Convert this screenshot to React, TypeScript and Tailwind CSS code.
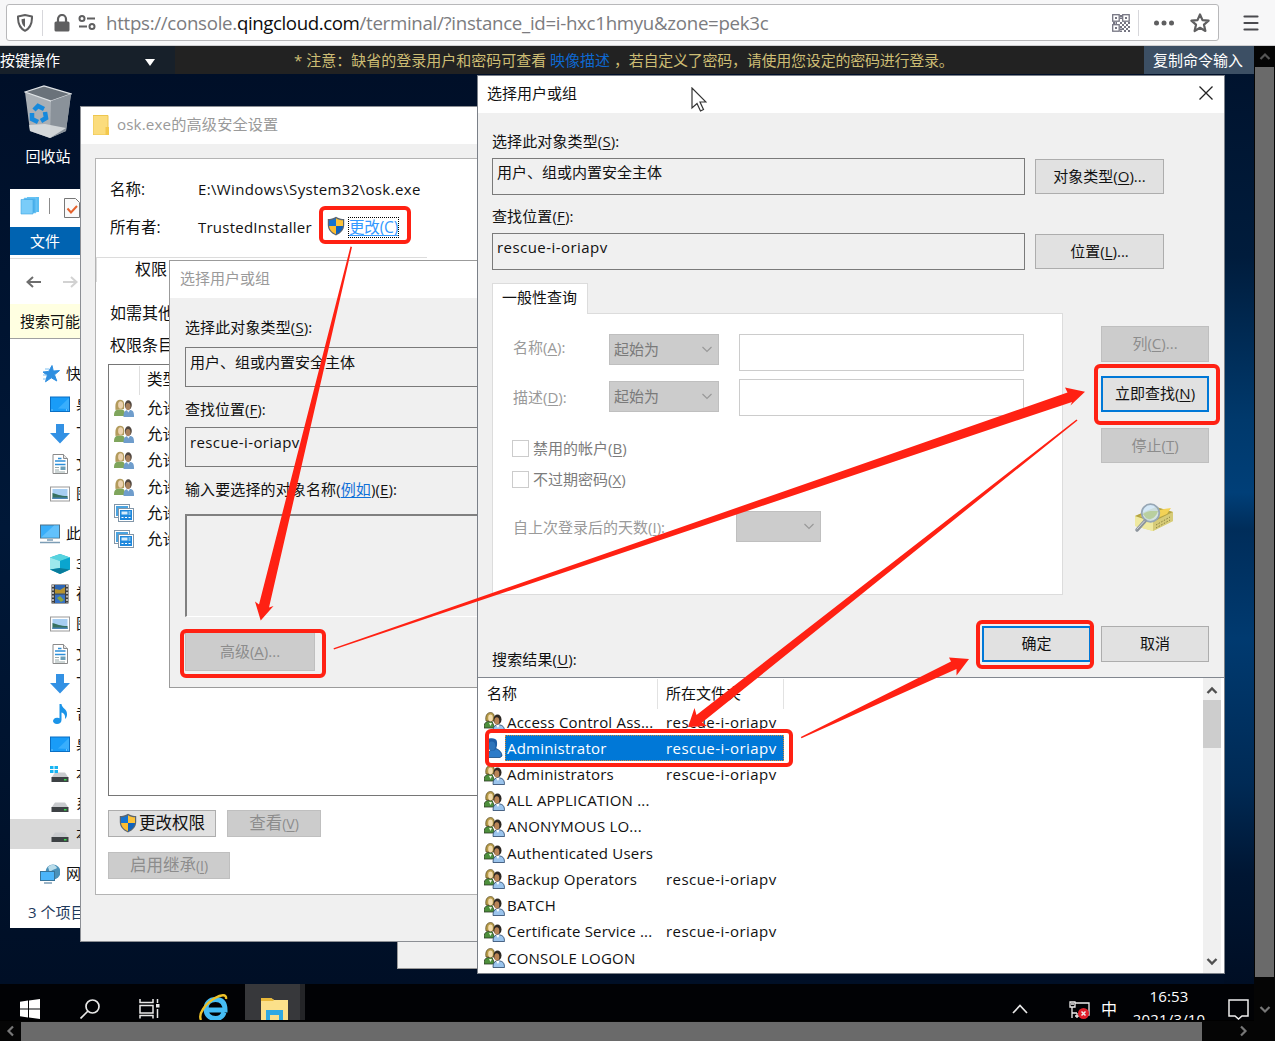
import React from "react";

const Key = ({ k }: { k: string }) => (
  <>
    (<span className="underline underline-offset-2">{k}</span>)
  </>
);

/* ---------- icons ---------- */

const Shield = ({ className = "" }: { className?: string }) => (
  <svg viewBox="0 0 18 20" className={`h-5 w-[18px] shrink-0 ${className}`}>
    <path d="M9 .7C6.500 2.400 3.500 3 .8 3V9c0 5 3.500 8.500 8.200 10.400C13.700 17.500 17.200 14 17.200 9V3C14.500 3 11.500 2.400 9 .7z" fill="#5b6570" />
    <path d="M9 2.200C7 3.600 4.500 4.200 2 4.300V10h7z" fill="#1573d0" />
    <path d="M9 2.200c2 1.400 4.500 2 7 2.100V10H9z" fill="#fcc238" />
    <path d="M2.100 10c.4 4 3.200 6.600 6.900 8.200V10z" fill="#fcbd30" />
    <path d="M15.900 10c-.4 4-3.200 6.600-6.900 8.200V10z" fill="#0f62bd" />
  </svg>
);

const Users = () => (
  <svg viewBox="0 0 20 18" className="h-[18px] w-5 shrink-0">
    <path d="M0 17c0-4 1-6 4-6.500h4c2 .5 3 2 3 6.500z" fill="#7fa55c" />
    <path d="M1.500 11C1 6 1.500.7 6 .7S10.500 5 10 10z" fill="#b39b5c" />
    <ellipse cx="6.600" cy="6" rx="2.500" ry="3.700" fill="#ecd3b0" />
    <path d="M9.500 18c0-4.500 1-6.500 4-7h3c3 .5 3.500 2.500 3.500 7z" fill="#6f9dcc" />
    <ellipse cx="14.300" cy="6" rx="3.500" ry="4.700" fill="#50463e" />
    <ellipse cx="14" cy="7.500" rx="2.500" ry="3.600" fill="#a8805c" />
    <path d="M12.500 11l2 2.500 1.500-2.500z" fill="#e8edf4" />
  </svg>
);

const AppBoxes = () => (
  <svg viewBox="0 0 20 18" className="h-[18px] w-5 shrink-0">
    <rect x=".5" y=".5" width="15" height="13" fill="#fff" stroke="#8296a8" />
    <rect x="2" y="2" width="12" height="10" fill="#4aa3e0" />
    <rect x="4.500" y="4.500" width="15" height="13" fill="#fff" stroke="#8296a8" />
    <rect x="6" y="6" width="12" height="10" fill="#1e88dd" />
    <path d="M7.500 7.500h6v3h-6zM14.500 7.500h2v1h-2zM14.500 9.500h2v1h-2z" fill="#d6edfc" />
    <path d="M7.500 13.500h2M11 13.500h2M14.500 13.500h2" stroke="#fff" />
  </svg>
);

const ListUsers = () => (
  <svg viewBox="0 0 21 20" className="h-5 w-[21px] shrink-0">
    <path d="M0 16c0-4 1-6 4-6.500h4l3 6.500z" fill="#4d8f3c" stroke="#2b3b24" strokeWidth=".8" />
    <path d="M2 9C1 4 3 .5 6.500.5S11 4 10 9z" fill="#b59a48" stroke="#58491f" strokeWidth=".7" />
    <ellipse cx="6.500" cy="6" rx="2.300" ry="3.400" fill="#f3dcae" />
    <path d="M5 11l1.500 3L8 11z" fill="#eef3e8" />
    <ellipse cx="13.500" cy="7.500" rx="4" ry="5" fill="#2c2722" />
    <ellipse cx="12.800" cy="9" rx="2.500" ry="3.800" fill="#b98456" />
    <path d="M9 19.500c0-4 1-6 4-6.500h3c3.500.5 4.500 3 4.500 6.500z" fill="#9bc4ec" stroke="#274468" strokeWidth=".8" />
    <path d="M12 13l2 3 1.500-3z" fill="#fff" />
  </svg>
);

const ListUser = () => (
  <svg viewBox="0 0 21 20" className="h-5 w-[21px] shrink-0">
    <path d="M4.500 19.500c-.5-4 .5-6.500 2.500-7.500l5-1.500c3.500 1.500 6 4 6 7.500l-2 1.500z" fill="#2d7cc8" stroke="#174a80" strokeWidth=".8" />
    <path d="M3 1.500C6-.5 12-.5 12.800 3c.8 3.500 0 7.500-2.300 9.500H7.500C4 10 3 6 3 1.500z" fill="#1d5ea6" />
    <ellipse cx="7.800" cy="8" rx="3.500" ry="4.600" fill="#2d74ba" />
  </svg>
);

const Chevron = ({ className = "", d, w = 2 }: { className?: string; d: "up" | "down" | "left" | "right"; w?: number }) => {
  const paths = { up: "M1.500 8L6 3.500 10.500 8", down: "M1.500 4L6 8.500 10.500 4", left: "M8 1.500L3.500 6 8 10.500", right: "M4 1.500L8.500 6 4 10.500" };
  return (
    <svg viewBox="0 0 12 12" className={`size-3 shrink-0 ${className}`} fill="none" stroke="currentColor" strokeWidth={w}>
      <path d={paths[d]} />
    </svg>
  );
};

const TreeIcon = ({ kind }: { kind: string }) => (
  <svg viewBox="0 0 20 20" className="size-5 shrink-0">
    {kind === "star" && (
      <>
        <path d="M12 1.500l1.300 5.500 6.200-.4-5 4.200 2.300 6.200-5.500-3.200-5.800 4L7.300 11.500 3 8l5.700-.6z" fill="#2f8fe0" stroke="#2f8fe0" />
        <path d="M5 5h4M3 11h4M3 15h3" stroke="#7fc0f0" />
      </>
    )}
    {kind === "desktop" && (
      <>
        <rect x=".5" y="3" width="19" height="14.500" fill="#199cf8" stroke="#0a6fc4" />
        <path d="M8 14.500L19 4v11z" fill="#39aefc" />
        <path d="M1.500 16h2M16 16h2.500" stroke="#bfe4ff" strokeDasharray="1 1" />
      </>
    )}
    {kind === "down" && <path d="M6 0h8v9h6L10 19.500 0 9h6z" fill="#3391e4" />}
    {kind === "doc" && (
      <>
        <path d="M3 .5h10.500L17.500 4.500v15H3z" fill="#fff" stroke="#8a8a8a" />
        <path d="M13.500.5v4h4" fill="#e5e5e5" stroke="#8a8a8a" />
        <path d="M8 4.500h3.500M5 7h10.500M5 10.500h10.500" stroke="#2e8fd8" strokeWidth="1.500" />
        <path d="M5 13.500h4M5 16h4M5 18h10" stroke="#9aa" />
        <path d="M10.500 12.500h5v3.500h-5z" fill="#6b9fb8" />
      </>
    )}
    {kind === "pic" && (
      <>
        <rect x=".5" y="3" width="19" height="14" fill="#fff" stroke="#999" />
        <rect x="2.500" y="5" width="15" height="10" fill="#a7cef2" />
        <path d="M2.500 9c5 1 7 3 15 3v3h-15z" fill="#37715f" />
        <path d="M2.500 13.500h15V15h-15z" fill="#4b86b8" />
      </>
    )}
    {kind === "pc" && (
      <>
        <rect x=".5" y="1" width="19" height="13" fill="#39aefa" stroke="#4e7289" />
        <path d="M1 13.500L14 1.500h5v12z" fill="#62c1fc" />
        <path d="M7 16h6M0 18.500h20" stroke="#7c9db5" strokeWidth="1.500" />
      </>
    )}
    {kind === "cube" && (
      <>
        <path d="M10 0l10 3.500v12L10 20 0 15.500v-12z" fill="#22b4cb" />
        <path d="M0 3.500L10 0l10 3.500L10 7z" fill="#57d3df" />
        <path d="M0 3.500L10 7v7L0 15.500z" fill="#9ce9ec" />
        <path d="M10 7l10-3.500v12L10 14z" fill="#0aa5cf" />
        <path d="M0 15.500L10 14l10 1.500L10 20z" fill="#087c9c" />
      </>
    )}
    {kind === "video" && (
      <>
        <rect x="1.500" y=".5" width="17" height="19" fill="#3c3c3c" />
        <rect x="5" y="1" width="10" height="8.500" fill="#2c66b4" />
        <rect x="5" y="10.500" width="10" height="8.500" fill="#3872c4" />
        <path d="M5 5l5 1 5-3v6.500H5z" fill="#b5922f" />
        <path d="M7 14l3-2 4 4-3 2z" fill="#89a43e" />
        <path d="M3 1v18M17 1v18" stroke="#ddd" strokeWidth="1.500" strokeDasharray="2 1.500" />
      </>
    )}
    {kind === "music" && <path d="M9.500 0h2c0 4 6 5 5.500 10.500 0 2-1 3.500-2 4.500.5-4-1-6-3.500-6.500V16c0 2.500-2 4-4.500 4S3 18.500 3 17s2-3.500 4.500-3.200c1 0 1.500.2 2 .4z" fill="#1b94e8" />}
    {(kind === "drive" || kind === "windrive") && (
      <>
        <path d="M5 8.500h10l3.500 5h-17z" fill="#c9cbce" />
        <rect x="1.500" y="13" width="17" height="5" fill="#3d4144" />
        <rect x="14" y="15" width="2.500" height="1.500" fill="#35e24a" />
        {kind === "windrive" && <path d="M0 2h3.500v3H0zM4.500 2H8v3H4.500zM0 6h3.500v3H0zM4.500 6H8v3H4.500z" fill="#17b4f2" />}
      </>
    )}
    {kind === "network" && (
      <>
        <circle cx="13" cy="8" r="7.500" fill="#4a91b9" />
        <path d="M8 3c4-4 8-2 9 1-3 2-5 1-7 5z" fill="#b9dcea" />
        <rect x=".5" y="7.500" width="14" height="9" fill="#4bb5fa" stroke="#38759b" />
        <path d="M4 19h8" stroke="#7c9db5" strokeWidth="1.500" />
      </>
    )}
  </svg>
);

/* ---------- small controls ---------- */

const Btn = ({ children, className = "", disabled, focus }: { children: React.ReactNode; className?: string; disabled?: boolean; focus?: boolean }) => (
  <div
    className={`flex shrink-0 items-center justify-center pb-[2px] ${
      disabled ? "border border-[#bfbfbf] bg-[#cccccc] text-[#8c8c8c]" : focus ? "border-2 border-[#0078d7] bg-[#e1e1e1]" : "border border-[#adadad] bg-[#e1e1e1]"
    } ${className}`}
  >
    {children}
  </div>
);

const Combo = ({ label = "", className = "" }: { label?: string; className?: string }) => (
  <div className={`flex h-[31px] items-center justify-between border border-[#bfbfbf] bg-[#cccccc] pr-[5px] pb-px pl-1 text-[#7a7a7a] ${className}`}>
    <span>{label}</span>
    <Chevron d="down" w={1.200} className="text-[#999]" />
  </div>
);

/* ---------- browser ---------- */

const BrowserBar = () => (
  <div className="flex h-[46px] shrink-0 items-start border-b border-[#cfcfd1] bg-[#f7f7f8] pt-1 pl-1.5 text-[#5f5f60]">
    <div className="flex h-[37px] w-[1213px] items-center rounded-[3px] border border-[#b8b8ba] bg-white">
      <svg viewBox="0 0 16 18" className="ml-2.5 h-[18px] w-4" fill="none" stroke="currentColor" strokeWidth="2">
        <path d="M8 1L15 2.500C15.200 9.500 13.500 14 8 16.800 2.500 14 .8 9.500 1 2.500z" strokeLinejoin="round" />
        <path d="M8 4.500l-3.500.8c0 3.700 1 6.200 3.500 8z" fill="currentColor" stroke="none" />
      </svg>
      <div className="ml-[9px] h-[26px] w-px bg-[#d7d7db]" />
      <svg viewBox="0 0 16 18" className="ml-[11px] h-[18px] w-4" fill="currentColor">
        <rect x=".5" y="7.500" width="15" height="10" rx="1.500" />
        <path d="M4 9V5a4 4 0 018 0v4" fill="none" stroke="currentColor" strokeWidth="2.200" />
      </svg>
      <svg viewBox="0 0 18 15" className="ml-2 h-[15px] w-[18px]" fill="none" stroke="currentColor" strokeWidth="2">
        <circle cx="4" cy="3.500" r="2.500" />
        <path d="M9 3.500h8M1 11.500h8" />
        <circle cx="14" cy="11.500" r="2.500" />
      </svg>
      <div className="ml-2.5 w-[1006px] text-[18.700px] leading-6 tracking-[-0.016em] whitespace-nowrap text-[#7c7c80]">
        https://console.<span className="tracking-[-0.022em] text-[#0c0c0d]">qingcloud.com</span>/terminal/?instance_id=i-hxc1hmyu&amp;zone=pek3c
      </div>
      <svg viewBox="0 0 18 18" className="h-[18px] w-[18px] shrink-0" fill="none" stroke="#757582" strokeWidth="1.300">
        <rect x=".7" y=".7" width="6.500" height="6.500" />
        <rect x="10.700" y=".7" width="6.500" height="6.500" />
        <rect x=".7" y="10.700" width="6.500" height="6.500" />
        <path d="M3 4h2M13 4h2M3 14h2M9 1v4M8 9h2M1 9h4M12 9h2M16 9h2M10 11h2M14 11h2M12 13h2M16 13h2M10 15h2M14 15h2M12 17h2M16 17h2M9 12v6" strokeWidth="2" strokeDasharray="2 .5" />
      </svg>
      <div className="ml-2 h-[26px] w-px bg-[#d7d7db]" />
      <svg viewBox="0 0 22 6" className="ml-[14px] h-1.5 w-[22px] shrink-0" fill="currentColor">
        <circle cx="3.500" cy="3" r="2.500" />
        <circle cx="11" cy="3" r="2.500" />
        <circle cx="18.500" cy="3" r="2.500" />
      </svg>
      <svg viewBox="0 0 20 20" className="ml-[15px] size-5 shrink-0" fill="none" stroke="currentColor" strokeWidth="2.200" strokeLinejoin="round">
        <path d="M10 1.500l2.500 5.600 6.100.6-4.600 4 1.400 6.300L10 14.800 4.600 18 6 11.700l-4.600-4 6.100-.6z" />
      </svg>
    </div>
    <svg viewBox="0 0 16 16" className="mt-[11px] ml-6 size-4" stroke="#4a4a4f" strokeWidth="2.200" strokeLinecap="round">
      <path d="M1.500 1.500h13M1.500 8h13M1.500 14.500h13" />
    </svg>
  </div>
);

const CommandBar = () => (
  <div className="flex h-7 shrink-0 items-center bg-[#222222] text-white">
    <div className="flex h-7 w-[175px] items-center justify-between bg-[#17202a] pr-5">
      <span>按键操作</span>
      <svg viewBox="0 0 10 7" className="mt-1 h-[7px] w-2.5" fill="#fff">
        <path d="M0 0h10L5 7z" />
      </svg>
    </div>
    <div className="w-[969px] pl-[119px] whitespace-nowrap text-[#cdbd74]">
      * 注意：缺省的登录用户和密码可查看 <span className="text-[#0e68d0]">映像描述</span> <span className="tracking-[-0.016em]">，若自定义了密码，请使用您设定的密码进行登录。</span>
    </div>
    <div className="flex h-7 w-[110px] items-center justify-center bg-[#3c4f64] pr-0.5">复制命令输入</div>
  </div>
);

/* ---------- desktop windows ---------- */

const tree: [string, string][] = [
  ["pc", "此电脑"],
  ["cube", "3D 对象"],
  ["video", "视频"],
  ["pic", "图片"],
  ["doc", "文档"],
  ["down", "下载"],
  ["music", "音乐"],
  ["desktop", "桌面"],
  ["windrive", "本地磁盘"],
  ["drive", "系统"],
  ["drive", "本地磁盘"],
];
const quick: [string, string][] = [
  ["star", "快速访问"],
  ["desktop", "桌面"],
  ["down", "下载"],
  ["doc", "文档"],
  ["pic", "图片"],
];

const TreeRow = ({ kind, label, root, active }: { kind: string; label: string; root?: boolean; active?: boolean }) => (
  <div className={`flex h-[30px] items-center gap-1.5 ${root ? "pl-[30px]" : "pl-10"} ${active ? "bg-[#d9d9d9]" : ""}`}>
    <TreeIcon kind={kind} />
    <span className="pb-0.5">{label}</span>
  </div>
);

const Explorer = () => (
  <div className="absolute top-[115px] left-[10px] flex h-[739px] w-[71px] flex-col overflow-hidden bg-white whitespace-nowrap">
    <div className="flex h-[38px] shrink-0 items-center">
      <svg viewBox="0 0 20 20" className="mb-1 ml-2.5 size-5 shrink-0">
        <path d="M7 1h12v15H7z" fill="#5bbdf2" />
        <path d="M4 2h12v15H4z" fill="#4db3ee" stroke="#8bd3fa" strokeWidth=".6" />
        <path d="M1 3.500h12V18H1z" fill="#7accf9" stroke="#3ea5e0" strokeWidth=".6" />
      </svg>
      <div className="mb-1 ml-[9px] h-4 w-px bg-[#8b8b8b]" />
      <svg viewBox="0 0 17 20" className="ml-3.5 h-5 w-[17px] shrink-0" fill="none">
        <path d="M.5.5h11l4 4v15H.5z" fill="#fafafa" stroke="#777" />
        <path d="M3.500 10.500l3.500 4 6-6.500" stroke="#e5622c" strokeWidth="2" />
      </svg>
    </div>
    <div className="flex h-7 shrink-0 items-center bg-[#0063b1] pb-px pl-5 text-white">文件</div>
    <div className="mt-[3px] flex h-[46px] shrink-0 items-center gap-[22px] border-t border-[#dcdcdc] pl-4">
      <svg viewBox="0 0 15 12" className="h-3 w-[15px] shrink-0" fill="none" stroke="#6d6d6d" strokeWidth="2">
        <path d="M15 6H1.500M7 1L1.500 6 7 11" />
      </svg>
      <svg viewBox="0 0 15 12" className="h-3 w-[15px] shrink-0" fill="none" stroke="#d2d2d2" strokeWidth="2">
        <path d="M0 6h13.500M8 1l5.500 5L8 11" />
      </svg>
    </div>
    <div className="flex h-[35px] shrink-0 items-center border-b border-[#a0a0a0] bg-[#ffffe1] pl-2.5">搜索可能需要一段时间</div>
    <div className="mt-5 flex flex-col">
      {quick.map(([k, l], i) => (
        <TreeRow key={l} kind={k} label={l} root={i === 0} />
      ))}
      <div className="h-2.5" />
      {tree.map(([k, l], i) => (
        <TreeRow key={i} kind={k} label={l} root={i === 0} active={i === 10} />
      ))}
      <div className="h-2.5" />
      <TreeRow kind="network" label="网络" root />
    </div>
    <div className="mt-[13px] h-5 pl-[18px] text-[#1e395b]">3 个项目</div>
  </div>
);

const SecurityWindow = () => (
  <div className="absolute top-[32px] left-[80px] h-[836px] w-[400px] overflow-hidden border border-[#8c8f94] bg-[#f0f0f0] whitespace-nowrap">
    <div className="flex h-[37px] items-center bg-white pl-3 text-[#9a9a9a]">
      <svg viewBox="0 0 16 20" className="mb-0.5 h-5 w-4">
        <path d="M0 .5h15V20H0z" fill="#fbdc7c" stroke="#eec64e" />
        <path d="M12.500 12H16v8h-3.500z" fill="#f3c84c" />
      </svg>
      <span className="ml-2 pb-[3px] text-[15.200px] tracking-[.008em]">osk.exe的高级安全设置</span>
    </div>
    <div className="mt-3.5 ml-3.5 h-[737px] w-[400px] border border-[#b4b4b4] bg-white">
      <div className="mt-5 flex h-5 items-center pl-[14px]">
        <span className="w-[88px] text-[15.500px]">名称:</span>
        <span className="text-[15px] tracking-[.024em]">E:\Windows\System32\osk.exe</span>
      </div>
      <div className="mt-[18px] flex h-5 items-center pl-[14px]">
        <span className="w-[88px] shrink-0 text-[15.500px]">所有者:</span>
        <span className="w-[129px] shrink-0 text-[15px] tracking-[.016em]">TrustedInstaller</span>
        <Shield className="mb-0.5" />
        <span className="ml-[3px] flex h-[21px] items-center border border-dotted border-black text-[15.500px] tracking-[-0.010em] text-[#3399ff] underline underline-offset-2">更改(C)</span>
      </div>
      <div className="mt-5 flex h-[25px] border-l border-[#dcdcdc]">
        <div className="w-[330px] border-t border-[#dcdcdc] pt-px pl-[38px] text-[16px] leading-5">权限</div>
      </div>
      <div className="mt-[21px] h-5 pl-[14px] text-[16px] leading-5">如需其他信息，请双击权限条目</div>
      <div className="mt-3 h-5 pl-[14px] text-[16px] leading-5">权限条目:</div>
      <div className="mt-[9px] ml-3 h-[432px] w-[400px] border border-[#767676]">
        <div className="flex h-[30px] pt-px">
          <div className="w-[31px] border-r border-[#dedede]" />
          <div className="pt-[3px] pl-[7px] text-[15.500px] leading-5">类型</div>
        </div>
        <div className="flex flex-col">
          {[0, 1, 2, 3, 4, 5].map((i) => (
            <div key={i} className="flex h-[26.200px] items-center pl-[5px]">
              {i < 4 ? <Users /> : <AppBoxes />}
              <span className="ml-[13px] text-[15.500px]">允许</span>
            </div>
          ))}
        </div>
      </div>
      <div className="mt-3.5 ml-3 flex gap-[11px] text-[16.500px]">
        <Btn className="h-[27px] w-[108px]">
          <Shield />
          <span className="ml-0.5">更改权限</span>
        </Btn>
        <Btn disabled className="h-[27px] w-[94px]">
          <span className="pt-0.5">
            查看<span className="text-[14px]"><Key k="V" /></span>
          </span>
        </Btn>
      </div>
      <div className="mt-[15px] ml-3 flex text-[16.500px]">
        <Btn disabled className="h-[27px] w-[122px]">
          <span className="pt-0.5">
            启用继承<span className="text-[14px]"><Key k="I" /></span>
          </span>
        </Btn>
      </div>
    </div>
  </div>
);

const SelectSmall = () => (
  <div className="absolute top-[186px] left-[169px] h-[428px] w-[310px] overflow-hidden border border-[#9b9b9b] bg-[#f0f0f0] whitespace-nowrap">
    <div className="h-[37px] bg-white pt-[7px] pl-2.5 leading-5 text-[#9a9a9a]">选择用户或组</div>
    <div className="pl-[15px] leading-5">
      <div className="mt-[19px] h-5 tracking-[.008em]">选择此对象类型<Key k="S" />:</div>
      <div className="mt-2.5 h-10 w-[320px] border border-[#7a7a7a] pt-1 pl-1">用户、组或内置安全主体</div>
      <div className="mt-3 h-5">查找位置<Key k="F" />:</div>
      <div className="mt-2 h-10 w-[320px] border border-[#7a7a7a] pt-1 pl-1 tracking-[.026em]">rescue-i-oriapv</div>
      <div className="mt-3 h-5 tracking-[.008em]">
        输入要选择的对象名称(<span className="text-[#1070d8] underline underline-offset-2">例如</span>)<Key k="E" />:
      </div>
      <div className="mt-[15px] h-[103px] w-[320px] border-t-2 border-b border-l-2 border-t-[#808080] border-b-white border-l-[#808080]" />
      <Btn disabled className="mt-[15px] h-[39px] w-[130px]">
        <span>高级<Key k="A" />...</span>
      </Btn>
    </div>
  </div>
);

const results: [string, boolean][] = [
  ["Access Control Ass...", true],
  ["Administrator", true],
  ["Administrators", true],
  ["ALL APPLICATION ...", false],
  ["ANONYMOUS LO...", false],
  ["Authenticated Users", false],
  ["Backup Operators", true],
  ["BATCH", false],
  ["Certificate Service ...", true],
  ["CONSOLE LOGON", false],
];

const SelectMain = () => (
  <div className="absolute top-px left-[477px] flex h-[899px] w-[748px] flex-col overflow-hidden border border-[#7b8088] bg-[#f0f0f0] leading-5 whitespace-nowrap">
    <div className="flex h-[37px] shrink-0 items-center justify-between bg-white pr-[11px] pb-[3px] pl-[9px]">
      <span>选择用户或组</span>
      <svg viewBox="0 0 14 14" className="size-3.5" stroke="#222" strokeWidth="1.300">
        <path d="M.5.5l13 13M13.500.5l-13 13" />
      </svg>
    </div>
    <div className="flex flex-col pl-3.5">
      <div className="mt-[18px] h-5 tracking-[.008em]">选择此对象类型<Key k="S" />:</div>
      <div className="mt-[7px] flex items-center gap-2.5">
        <div className="h-[37px] w-[533px] border border-[#7a7a7a] pt-[3px] pl-1">用户、组或内置安全主体</div>
        <Btn className="h-[35px] w-[129px]"><span>对象类型<Key k="O" />...</span></Btn>
      </div>
      <div className="mt-[11px] h-5 tracking-[.008em]">查找位置<Key k="F" />:</div>
      <div className="mt-[7px] flex items-center gap-2.5">
        <div className="h-[37px] w-[533px] border border-[#7a7a7a] pt-[3px] pl-1 tracking-[.030em]">rescue-i-oriapv</div>
        <Btn className="h-[35px] w-[129px]"><span>位置<Key k="L" />...</span></Btn>
      </div>
      <div className="mt-[13px] flex h-[313px]">
        <div className="flex w-[571px] flex-col">
          <div className="z-10 -mb-px h-[31px] w-[96px] border border-b-0 border-[#dcdcdc] bg-white pt-[3px] pl-[9px]">一般性查询</div>
          <div className="h-[282px] border border-[#dcdcdc] bg-white pt-5 pl-5 text-[#9a9a9a]">
            <div className="flex h-[37px]">
              <span className="w-[96px] pt-[3px]">名称<Key k="A" />:</span>
              <Combo label="起始为" className="w-[110px]" />
              <div className="ml-5 w-[285px] border border-[#cccccc]" />
            </div>
            <div className="mt-2 flex h-[37px]">
              <span className="w-[96px] pt-[8px]">描述<Key k="D" />:</span>
              <Combo label="起始为" className="mt-[2px] w-[110px]" />
              <div className="ml-5 w-[285px] border border-[#cccccc]" />
            </div>
            <div className="mt-[22px] flex h-5 items-center gap-1 text-[#7c7c7c]">
              <div className="-ml-px h-[17px] w-[17px] border border-[#cccccc]" />
              <span>禁用的帐户<Key k="B" /></span>
            </div>
            <div className="mt-[11px] flex h-5 items-center gap-1 text-[#7c7c7c]">
              <div className="-ml-px h-[17px] w-[17px] border border-[#cccccc]" />
              <span>不过期密码<Key k="X" /></span>
            </div>
            <div className="mt-[22px] flex h-[31px]">
              <span className="w-[223px] pt-[6px]">自上次登录后的天数<Key k="I" />:</span>
              <Combo className="w-[85px]" />
            </div>
          </div>
        </div>
        <div className="ml-[38px] flex flex-col pt-[43px]">
          <Btn disabled className="h-[36px] w-[108px]"><span>列<Key k="C" />...</span></Btn>
          <Btn focus className="mt-3.5 h-[36px] w-[108px]"><span>立即查找<Key k="N" /></span></Btn>
          <Btn disabled className="mt-4 h-[35px] w-[108px]"><span>停止<Key k="T" /></span></Btn>
          <svg viewBox="0 0 40 30" className="mt-10 ml-[33px] h-[30px] w-10">
            <path d="M1 13L22 4l17 5v9L19 28 1 23z" fill="#e9df87" />
            <path d="M1 13l18 6v9L1 23z" fill="#efe9a0" />
            <path d="M19 19L39 9v9L19 28z" fill="#d6cb78" />
            <path d="M1 13L22 4l17 5-20 10z" fill="#b3a344" />
            <path d="M5 13l25-7 7-1-4 6-14 6z" fill="#f3d256" />
            <path d="M22 22l14-8M22 25l14-8" stroke="#8a8140" strokeDasharray="1.500 1.500" />
            <circle cx="16.500" cy="10" r="8.800" fill="#cfe6f8" fillOpacity=".85" stroke="#97a7b5" strokeWidth="1.800" />
            <path d="M9 11c5-4 10-3 15-3-2 7-8 10-12 7z" fill="#b9cf9f" />
            <path d="M11 18l-8 9" stroke="#8c949c" strokeWidth="3.500" strokeLinecap="round" />
            <path d="M10.500 18l-7.500 8" stroke="#d4d8dc" strokeLinecap="round" />
          </svg>
        </div>
      </div>
      <div className="mt-[30px] flex h-[51px] items-start">
        <div className="mt-[23px] w-[490px] tracking-[.010em]">搜索结果<Key k="U" />:</div>
        <Btn focus className="h-[36px] w-[109px]">确定</Btn>
        <Btn className="ml-2.5 h-[36px] w-[108px]">取消</Btn>
      </div>
    </div>
    <div className="flex min-h-0 flex-1 border-t border-[#82878f] bg-white">
      <div className="flex w-[725px] flex-col">
        <div className="flex h-[31px] shrink-0 pt-px">
          <div className="w-[180px] border-r border-[#e2e2e2] pt-1 pl-[9px]">名称</div>
          <div className="w-[126px] border-r border-[#e2e2e2] pt-1 pl-[8px]">所在文件夹</div>
        </div>
        {results.map(([name, folder], i) => (
          <div key={name} className="flex h-[26.220px] shrink-0 items-center pl-1.5 text-[15px]">
            {i === 1 ? <ListUser /> : <ListUsers />}
            <div className={`flex h-[26px] w-[279px] items-center pb-px pl-[2px] ${i === 1 ? "bg-[#0078d7] text-white outline-1 -outline-offset-1 outline-dotted outline-[#e08a30]" : ""}`}>
              <span className="w-[159px] tracking-[.014em]">{name}</span>
              <span className="tracking-[.030em]">{folder ? "rescue-i-oriapv" : ""}</span>
            </div>
          </div>
        ))}
      </div>
      <div className="flex w-[18px] flex-col items-center justify-between bg-[#f0f0f0] text-[#505050]">
        <div className="flex w-full flex-col items-center">
          <Chevron d="up" w={2.400} className="mt-[7px]" />
          <div className="mt-[3px] h-[48px] w-full bg-[#cdcdcd]" />
        </div>
        <Chevron d="down" w={2.400} className="mb-[6px]" />
      </div>
    </div>
  </div>
);

const Taskbar = () => (
  <div className="flex h-9 shrink-0 items-center overflow-hidden bg-[#010205] text-white">
    <svg viewBox="0 0 20 20" className="mt-3.5 ml-5 size-5" fill="#fff">
      <path d="M0 2.700L8 1.500V9.500H0zM9 1.400L20 0V9.500H9zM0 10.500h8v8L0 17.300zM9 10.500h11V20L9 18.600z" />
    </svg>
    <svg viewBox="0 0 20 20" className="mt-3.5 ml-10 size-5" fill="none" stroke="#e8e8e8" strokeWidth="1.700">
      <circle cx="12.500" cy="7.500" r="6.500" />
      <path d="M8 12L.5 19.500" />
    </svg>
    <svg viewBox="0 0 21 20" className="mt-3.5 ml-[39px] h-5 w-[21px]" fill="none" stroke="#e8e8e8" strokeWidth="1.500">
      <path d="M1 0v3.500h13V0M1 19.500v-3h13v3M1 6.500h13v7.500H1zM18.500 0v4M18.500 10v9" />
      <path d="M17 5h3.500v3.500H17z" fill="#e8e8e8" stroke="none" />
    </svg>
    <svg viewBox="0 0 30 28" className="mt-[12px] ml-[39px] h-7 w-[30px]" fill="none">
      <path d="M25 18.500c-1.300 4-4.500 6-8.500 6-6 0-9.500-4-9.500-9.500S10.500 5.500 16.500 5.500c6.500 0 9.500 4 9.500 10.500H8" stroke="#45bdf5" strokeWidth="5" />
      <path d="M2 26C-1 20 6 10 16 4c6-3.500 12-4 11 1" stroke="#edc128" strokeWidth="2.400" />
    </svg>
    <div className="ml-4 flex h-9 w-[55px] justify-center bg-[#37383b]">
      <svg viewBox="0 0 27 24" className="mt-[13px] ml-1 h-6 w-[27px]">
        <path d="M0 1h10l3 2h14v21H0z" fill="#fbe08a" />
        <path d="M0 1h10l3 2-1 1H0z" fill="#e8b83a" />
        <path d="M5 24V13h17v11h-4v-6H9v6z" fill="#2fa9e2" />
      </svg>
    </div>
    <div className="h-9 w-[5px] bg-[#242528]" />
    <svg viewBox="0 0 16 10" className="mt-3.5 ml-[707px] h-2.5 w-4" fill="none" stroke="#e8e8e8" strokeWidth="1.700">
      <path d="M1 9l7-7.500L15 9" />
    </svg>
    <svg viewBox="0 0 21 18" className="mt-4 ml-[41px] h-[18px] w-[21px]" fill="none" stroke="#eee" strokeWidth="1.300">
      <path d="M6 2h14v12h-5M3 6v11M3 12h5M8 12v5M1 1h5v5H1zM2 3h3M6 15h4" />
      <circle cx="14.500" cy="12.500" r="5.500" fill="#e0202b" stroke="none" />
      <path d="M12.500 10.500l4 4M16.500 10.500l-4 4" strokeWidth="1.500" />
    </svg>
    <span className="mt-3.5 ml-[11px] text-[16px] leading-5">中</span>
    <div className="ml-[8px] flex h-9 w-[88px] flex-col items-center overflow-hidden pt-px text-[15px] leading-[23px]">
      <span className="shrink-0 tracking-[.012em]">16:53</span>
      <span className="shrink-0 tracking-[.012em]">2021/3/10</span>
    </div>
    <svg viewBox="0 0 21 21" className="mt-[15px] ml-[15px] h-[21px] w-[21px]" fill="none" stroke="#eee" strokeWidth="1.500">
      <path d="M1 1h19v16h-6l-3.500 3L7 17H1z" />
    </svg>
  </div>
);

const Desktop = () => (
  <div className="relative h-[910px] shrink-0 overflow-hidden bg-[linear-gradient(180deg,#000f28,#001838_50%,#000f26)]">
    <div className="absolute top-0 right-0 h-full w-[30px] bg-[linear-gradient(180deg,#00132e,#001c3c_20%,#00396c_38%,#003f78_46%,#002d5a_50%,#003a70_62%,#002a55_78%,#001633_88%,#000e24)]" />
    <div className="absolute top-[11px] left-[16px] flex w-16 flex-col items-center text-white">
      <svg viewBox="0 0 48 54" className="h-[54px] w-12">
        <path d="M1 7L20 1l27 8-5 37-16 7L6 46z" fill="#a9afb5" />
        <path d="M1 7L20 1l27 8-20 7z" fill="#6a727a" stroke="#dfe3e6" strokeWidth="1.300" />
        <path d="M27 16l20-7-5 37-16 7z" fill="#8a929a" />
        <path d="M5 40l16-1 21 4-16 10L6 46z" fill="#dcdfe1" opacity=".85" />
        <g fill="none" stroke="#1689dc" strokeWidth="4.500">
          <path d="M10 25l4-4 6 3M21 27l1 6-5 3M14 37l-6-3 0-6" />
        </g>
      </svg>
      <span className="mt-[7px] leading-5">回收站</span>
    </div>
    <div className="absolute top-[860px] left-[397px] h-[35px] w-[90px] border border-[#999] bg-[#f0f0f0]" />
    <Explorer />
    <SecurityWindow />
    <SelectSmall />
    <SelectMain />
    <svg viewBox="0 0 16 25" className="absolute top-[13px] left-[691px] h-[25px] w-4" fill="#fff" stroke="#333" strokeWidth="1.200">
      <path d="M1 1v20l5-4.500 3.500 7.500 3-1.500L9 15h6z" />
    </svg>
  </div>
);

/* ---------- annotations ---------- */

const Mark = ({ className }: { className: string }) => <div className={`absolute rounded-md border-4 border-[#ff2113] ${className}`} />;

const Annotations = () => (
  <>
    <Mark className="top-[206px] left-[318.500px] h-[38px] w-[92px]" />
    <Mark className="top-[629px] left-[180px] h-[48.500px] w-[145.500px]" />
    <Mark className="top-[363.500px] left-[1093.500px] h-[61px] w-[126px]" />
    <Mark className="top-[619.500px] left-[975.500px] h-[49px] w-[118px]" />
    <Mark className="top-[729px] left-[485px] h-[37.500px] w-[307.500px]" />
    <svg viewBox="0 0 1275 1041" className="absolute inset-0 h-full w-full" fill="#ff2113">
      <path d="M350.500 246.500L352 247 269 607.500 273.500 606 260.700 620.500 255 601.500 259 604.500z" />
      <path d="M333.500 648.300L334 649.500 1072 402 1070.500 405.500 1085 391.700 1065 387.500 1067.500 392.500z" />
      <path d="M1076.500 419.500L1077.500 420.500 702 722.500 707 726 688 727 694.500 708 696.500 715z" />
      <path d="M800.800 737L801.500 738.300 956.500 669 956.500 675.500 969 659 949 657.500 951 661.500z" />
    </svg>
  </>
);

export default function App() {
  return (
    <div className="relative flex h-[1041px] w-[1275px] flex-col overflow-hidden bg-black font-['Open_Sans','Noto_Sans_CJK_SC',sans-serif] text-[15px] leading-5 text-[#111]">
      <BrowserBar />
      <div className="flex min-h-0 flex-1">
        <div className="flex w-[1254px] flex-col">
          <CommandBar />
          <Desktop />
          <Taskbar />
          <div className="flex h-[21px] items-center border-t border-black bg-[#050505] text-[#777]">
            <Chevron d="left" w={2.200} className="ml-[5px]" />
            <div className="ml-1 h-[19px] w-[1181px] bg-[#6a6a6a]" />
            <Chevron d="right" w={2.200} className="ml-[35px]" />
          </div>
        </div>
        <div className="flex w-[21px] flex-col items-center bg-[#050505] text-[#777]">
          <Chevron d="up" w={2.200} className="mt-[5px] text-[#555]" />
          <div className="mt-1 h-[910px] w-[19px] bg-[#6a6a6a]" />
          <Chevron d="down" w={2.200} className="mt-[26px]" />
        </div>
      </div>
      <Annotations />
    </div>
  );
}
